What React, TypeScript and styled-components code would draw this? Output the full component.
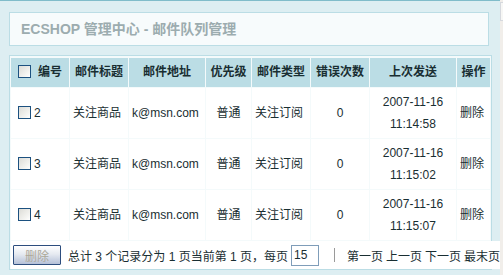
import React from "react";
import styled, { createGlobalStyle } from "styled-components";

const GlobalStyle = createGlobalStyle`
  html, body { margin: 0; padding: 0; }
  body {
    background: #DDEEF2;
    font: 12px "Liberation Sans", "Noto Sans CJK SC", sans-serif;
    color: #192E32;
    overflow: hidden;
  }
`;

const Page = styled.div`
  display: flex;
  width: 503px;
  height: 275px;
  overflow: hidden;
`;

const Main = styled.div`
  flex: 1;
  min-width: 0;
  border-top: 1px solid #80BCCA;
  padding-left: 9px;
`;

const ScrollStrip = styled.div`
  width: 3px;
  background: #F1EEEA;
  display: flex;
  flex-direction: column;
`;

const ScrollButton = styled.div`
  height: 17px;
  margin-top: 2px;
  border-top: 1px solid #D6D9DE;
  border-left: 1px solid #D6D9DE;
  border-bottom: 1px solid #D6D9DE;
  background: #F7F7F5;
`;

const Title = styled.h1`
  margin: 11px 0 0 0;
  width: 480px;
  box-sizing: border-box;
  padding: 6px 11px;
  line-height: 20px;
  font-size: 14px;
  font-weight: bold;
  font-family: "Liberation Sans", "Noto Sans CJK SC", sans-serif;
  color: #9CACAF;
  background: #F7FBFC;
  border: 1px solid #BBDDE5;
`;

const ListDiv = styled.div`
  margin-top: 9px;
  width: 483px;
  box-sizing: border-box;
  border: 1px solid #BBDDE5;
  background: #F4FAFB;
  padding-top: 1px;
`;

const Table = styled.table`
  width: 481px;
  table-layout: fixed;
  border-collapse: separate;
  border-spacing: 1px;
`;

const Th = styled.th`
  height: 29px;
  box-sizing: border-box;
  padding: 3px 0;
  line-height: 23px;
  background: #BBDDE5;
  white-space: nowrap;
  font-weight: bold;
  font-size: 12px;
  color: #192E32;
  text-align: center;
  overflow: visible;
`;

const Td = styled.td<{ $align?: "left" | "center" }>`
  background: #FFFFFF;
  padding: 3px;
  line-height: 22px;
  height: 50px;
  box-sizing: border-box;
  text-align: ${(p) => p.$align ?? "left"};
  vertical-align: middle;
  white-space: ${(p) => (p.$align === "center" ? "normal" : "nowrap")};
`;

const Check = styled.span<{ $head?: boolean }>`
  display: inline-block;
  width: 13px;
  height: 13px;
  box-sizing: border-box;
  border: 1px solid #1C5180;
  background: linear-gradient(135deg, #DCDCD7 0%, #F4F4F1 70%, #FFFFFF 100%);
  vertical-align: -2px;
  margin: 0 ${(p) => (p.$head ? 7 : 3)}px 0 ${(p) => (p.$head ? 0 : 4)}px;
`;

const Pager = styled.div`
  display: flex;
  align-items: center;
  width: max-content;
  min-width: 479px;
  height: 28px;
  box-sizing: border-box;
  margin-left: 1px;
  padding: 0 2px;
  background: #FFFFFF;
  white-space: nowrap;
`;

const Button = styled.button`
  width: 48px;
  height: 20px;
  padding: 0;
  border: 1px solid #2C4D7E;
  border-radius: 1px;
  background: linear-gradient(#FFFFFF 0%, #E6EAF1 45%, #B4C0D8 100%);
  color: #ACA899;
  font: 12px "Liberation Sans", "Noto Sans CJK SC", sans-serif;
  margin-right: 7px;
`;

const PagerText = styled.span`
  margin-right: 3px;
`;

const PageInput = styled.input`
  width: 28px;
  height: 21px;
  box-sizing: border-box;
  border: 1px solid #7F9DB9;
  padding: 0 2px;
  font: 12px "Liberation Sans", sans-serif;
  color: #192E32;
`;

const Divider = styled.span`
  display: inline-block;
  width: 1px;
  height: 14px;
  background: #9A9A9A;
  margin: 0 12px 0 15px;
`;

const PageLink = styled.span`
  margin-right: 3px;
`;

type Row = {
  id: number;
  time: string;
};

const rows: Row[] = [
  { id: 2, time: "11:14:58" },
  { id: 3, time: "11:15:02" },
  { id: 4, time: "11:15:07" },
];

const widths = [58, 58, 76, 45, 58, 58, 86, 33];

export default function App() {
  return (
    <>
      <GlobalStyle />
      <Page>
        <Main>
          <Title>ECSHOP 管理中心 - 邮件队列管理</Title>
          <ListDiv>
            <Table>
              <colgroup>
                {widths.map((w, i) => (
                  <col key={i} style={{ width: w }} />
                ))}
              </colgroup>
              <thead>
                <tr>
                  <Th>
                    <Check $head />
                    编号
                  </Th>
                  <Th>邮件标题</Th>
                  <Th>邮件地址</Th>
                  <Th>优先级</Th>
                  <Th>邮件类型</Th>
                  <Th>错误次数</Th>
                  <Th>上次发送</Th>
                  <Th>操作</Th>
                </tr>
              </thead>
              <tbody>
                {rows.map((r) => (
                  <tr key={r.id}>
                    <Td>
                      <Check />
                      {r.id}
                    </Td>
                    <Td>关注商品</Td>
                    <Td>k@msn.com</Td>
                    <Td $align="center">普通</Td>
                    <Td>关注订阅</Td>
                    <Td $align="center">0</Td>
                    <Td $align="center">2007-11-16 {r.time}</Td>
                    <Td>删除</Td>
                  </tr>
                ))}
              </tbody>
            </Table>
            <Pager>
              <Button disabled>删除</Button>
              <PagerText>总计 3 个记录分为 1 页当前第 1 页，每页</PagerText>
              <PageInput defaultValue="15" />
              <Divider />
              <PageLink>第一页</PageLink>
              <PageLink>上一页</PageLink>
              <PageLink>下一页</PageLink>
              <PageLink>最末页</PageLink>
            </Pager>
          </ListDiv>
        </Main>
        <ScrollStrip>
          <ScrollButton />
        </ScrollStrip>
      </Page>
    </>
  );
}
